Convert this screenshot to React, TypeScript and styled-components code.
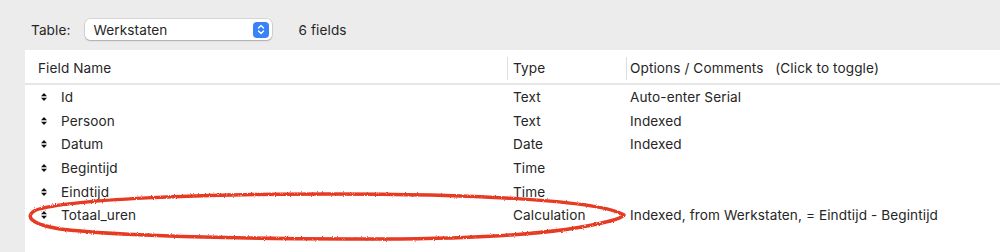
import React from 'react';
import styled, { createGlobalStyle } from 'styled-components';

const GlobalStyle = createGlobalStyle`
  html, body {
    margin: 0;
    padding: 0;
    background: #ececec;
  }
  body {
    font-family: Inter, "Noto Sans", "Liberation Sans", sans-serif;
    font-size: 13.6px;
    letter-spacing: 0.1px;
    color: #262626;
  }
`;

const Page = styled.div`
  width: 1000px;
  height: 252px;
  display: flex;
  flex-direction: column;
  overflow: hidden;
`;

const Toolbar = styled.div`
  height: 50px;
  box-sizing: border-box;
  padding: 9px 0 0 31px;
  display: flex;
  align-items: center;
`;

const Label = styled.span`
  margin-right: 15px;
`;

const Popup = styled.div`
  width: 187px;
  height: 21px;
  box-sizing: border-box;
  padding: 0 3px 0 8px;
  background: #fff;
  border-radius: 5px;
  box-shadow: 0 0 0 0.5px rgba(0, 0, 0, 0.18), 0 1px 1.5px rgba(0, 0, 0, 0.2);
  display: flex;
  align-items: center;
  justify-content: space-between;
`;

const Stepper = styled.div`
  width: 16px;
  height: 16px;
  border-radius: 4px;
  background: #3a82f7;
  display: flex;
  align-items: center;
  justify-content: center;
`;

const Count = styled.span`
  margin-left: 26px;
`;

const Table = styled.div`
  flex: 1;
  margin-left: 25px;
  background: #fff;
  position: relative;
`;

const Columns = styled.div<{ $height: number }>`
  display: grid;
  grid-template-columns: 482px 119px 1fr;
  height: ${(p) => p.$height}px;
  align-items: center;
`;

const HeaderRow = styled(Columns)`
  border-bottom: 2px solid #e6e6e6;
  padding-top: 2px;
  box-sizing: border-box;
`;

const HeaderCell = styled.div<{ $divider?: boolean; $pad: number }>`
  position: relative;
  padding-left: ${(p) => p.$pad}px;
  height: 100%;
  display: flex;
  align-items: center;
  white-space: pre;

  ${(p) =>
    p.$divider &&
    `&::before {
      content: '';
      position: absolute;
      left: 0;
      top: 5px;
      bottom: 3px;
      width: 1px;
      background: #dedede;
    }`}
`;

const Cell = styled.div<{ $pad: number }>`
  padding-left: ${(p) => p.$pad}px;
  display: flex;
  align-items: center;
  white-space: nowrap;
`;

const Grip = styled.svg`
  margin-left: 16px;
  margin-right: 14px;
`;

const Circle = styled.svg`
  position: absolute;
  left: -25px;
  top: -50px;
  pointer-events: none;
`;

const fields = [
  { name: 'Id', type: 'Text', options: 'Auto-enter Serial' },
  { name: 'Persoon', type: 'Text', options: 'Indexed' },
  { name: 'Datum', type: 'Date', options: 'Indexed' },
  { name: 'Begintijd', type: 'Time', options: '' },
  { name: 'Eindtijd', type: 'Time', options: '' },
  { name: 'Totaal_uren', type: 'Calculation', options: 'Indexed, from Werkstaten, = Eindtijd - Begintijd' },
];

const App = () => {
  return (
    <Page>
      <GlobalStyle />
      <Toolbar>
        <Label>Table:</Label>
        <Popup>
          <span>Werkstaten</span>
          <Stepper>
            <svg width="8" height="11" viewBox="0 0 8 11">
              <path d="M1.5 4 L4 1.5 L6.5 4 M1.5 7 L4 9.5 L6.5 7" fill="none" stroke="#fff" strokeWidth="1.4" strokeLinecap="round" strokeLinejoin="round" />
            </svg>
          </Stepper>
        </Popup>
        <Count>6 fields</Count>
      </Toolbar>
      <Table>
        <HeaderRow $height={35}>
          <HeaderCell $pad={13}>Field Name</HeaderCell>
          <HeaderCell $pad={6} $divider>Type</HeaderCell>
          <HeaderCell $pad={4} $divider>{'Options / Comments   (Click to toggle)'}</HeaderCell>
        </HeaderRow>
        {fields.map((f) => (
          <Columns key={f.name} $height={23.7}>
            <Cell $pad={0}>
              <Grip width="6" height="8" viewBox="0 0 6 8">
                <path d="M3 0 L6 3.3 L0 3.3 Z M0 4.7 L6 4.7 L3 8 Z" fill="#111" />
              </Grip>
              {f.name}
            </Cell>
            <Cell $pad={6}>{f.type}</Cell>
            <Cell $pad={4}>{f.options}</Cell>
          </Columns>
        ))}
        <Circle width="1000" height="252" viewBox="0 0 1000 252">
          <defs>
            <filter id="rough" x="-5%" y="-20%" width="110%" height="140%">
              <feTurbulence type="fractalNoise" baseFrequency="0.9" numOctaves="2" seed="3" />
              <feDisplacementMap in="SourceGraphic" scale="2.5" />
            </filter>
          </defs>
          <path
            d="M624 215 C600 200 470 194 330 194 C200 194 70 199 36 210 C24 216 30 224 60 229 C120 236 250 239 380 239 C470 239 560 234 610 221 C618 219 622 217 624 215 Z"
            fill="none"
            stroke="#e63a22"
            strokeWidth="3.4"
            strokeLinejoin="round"
            filter="url(#rough)"
          />
        </Circle>
      </Table>
    </Page>
  );
};

export default App;
